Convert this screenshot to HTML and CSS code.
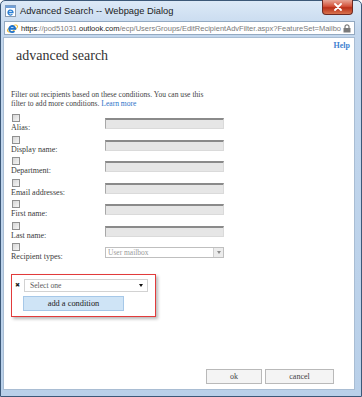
FILE: index.html
```html
<!DOCTYPE html>
<html lang="en">
<head>
    <meta charset="UTF-8">
    <title>Advanced Search -- Webpage Dialog</title>
    <link rel="stylesheet" href="styles.css">
</head>
<body>

<div class="window">
    <div class="titlebar">
        <svg class="title-icon" viewBox="0 0 11 12" xmlns="http://www.w3.org/2000/svg">
            <rect x="0.5" y="0.5" width="10" height="11" fill="#ffffff" stroke="#8a9bb0"/>
            <rect x="0.5" y="0.5" width="10" height="2.5" fill="#6f9fd8"/>
            <path d="M3 7.5h5a2.5 2.5 0 1 0 -0.6 1.7" fill="none" stroke="#2a7fd4" stroke-width="1.3"/>
        </svg>
        <span class="title-text">Advanced Search -- Webpage Dialog</span>
        <div class="close-btn">
            <svg viewBox="0 0 10 8" xmlns="http://www.w3.org/2000/svg">
                <path d="M2 1l6 6M8 1l-6 6" stroke="#ffffff" stroke-width="1.8" stroke-linecap="round"/>
            </svg>
        </div>
    </div>

    <div class="addressbar">
        <svg class="ie-icon" viewBox="0 0 12 12" xmlns="http://www.w3.org/2000/svg">
            <ellipse cx="6" cy="6" rx="6" ry="2.6" transform="rotate(-30 6 6)" fill="none" stroke="#f2b418" stroke-width="1"/>
            <path d="M2.6 6.3h6.4a3.3 3.3 0 1 0 -0.9 2.6" fill="none" stroke="#1e73cf" stroke-width="2"/>
        </svg>
        <span class="url"><span class="dark">https</span>://pod51031.<span class="dark">outlook.com</span>/ecp/UsersGroups/EditRecipientAdvFilter.aspx?FeatureSet=Mailbo</span>
        <svg class="lock" viewBox="0 0 8 9" xmlns="http://www.w3.org/2000/svg">
            <path d="M2 4V2.8a2 2 0 0 1 4 0V4" fill="none" stroke="#7a7a7a" stroke-width="1.2"/>
            <rect x="0.5" y="4" width="7" height="4.5" fill="#7a7a7a"/>
        </svg>
    </div>

    <div class="content">
        <div class="header">
            <h1>advanced search</h1>
            <a class="help">Help</a>
        </div>

        <p class="intro">Filter out recipients based on these conditions. You can use this filter to add more conditions. <span class="link">Learn more</span></p>

        <div class="fields">
            <div class="field-row">
                <div class="field-label"><input type="checkbox" class="check"><label>Alias:</label></div>
                <div class="textbox"></div>
            </div>
            <div class="field-row">
                <div class="field-label"><input type="checkbox" class="check"><label>Display name:</label></div>
                <div class="textbox"></div>
            </div>
            <div class="field-row">
                <div class="field-label"><input type="checkbox" class="check"><label>Department:</label></div>
                <div class="textbox"></div>
            </div>
            <div class="field-row">
                <div class="field-label"><input type="checkbox" class="check"><label>Email addresses:</label></div>
                <div class="textbox"></div>
            </div>
            <div class="field-row">
                <div class="field-label"><input type="checkbox" class="check"><label>First name:</label></div>
                <div class="textbox"></div>
            </div>
            <div class="field-row">
                <div class="field-label"><input type="checkbox" class="check"><label>Last name:</label></div>
                <div class="textbox"></div>
            </div>
            <div class="field-row">
                <div class="field-label"><input type="checkbox" class="check"><label>Recipient types:</label></div>
                <div class="dropdown">
                    <span>User mailbox</span>
                    <span class="dropdown-btn"><i class="tri-gray"></i></span>
                </div>
            </div>
        </div>

        <div class="condition-box">
            <div class="condition-row">
                <span class="remove">&#10006;</span>
                <div class="condition-select">
                    <span>Select one</span>
                    <i class="tri-black"></i>
                </div>
            </div>
            <div class="add-btn">add a condition</div>
        </div>

        <div class="footer">
            <div class="btn btn-ok">ok</div>
            <div class="btn btn-cancel">cancel</div>
        </div>
    </div>
</div>

</body>
</html>
```

FILE: styles.css
```css
* {
    box-sizing: border-box;
}

body {
    margin: 0;
    width: 362px;
    height: 397px;
    overflow: hidden;
    background: #ffffff;
}

.window {
    height: 397px;
    display: flex;
    flex-direction: column;
    border: 1px solid #3c5878;
    border-radius: 5px 5px 0 0;
    padding: 0 6px 6px 2px;
    background: linear-gradient(to bottom, #dce9f7 0px, #c3d7ed 30px, #b9d0e9 100%);
}

.titlebar {
    height: 19px;
    display: flex;
    align-items: center;
    padding-left: 2px;
}

.title-icon {
    width: 11px;
    height: 12px;
    margin-top: 1px;
}

.title-text {
    font-family: "Liberation Sans", sans-serif;
    font-size: 9.3px;
    color: #1b1b1b;
    margin-left: 4px;
}

.close-btn {
    margin-left: auto;
    margin-right: 2px;
    align-self: flex-start;
    margin-top: -1px;
    width: 31px;
    height: 15px;
    display: flex;
    align-items: center;
    justify-content: center;
    border: 1px solid #6e2a22;
    border-top: none;
    border-radius: 0 0 4px 4px;
    background: linear-gradient(to bottom, #e8a595 0%, #d3533b 45%, #b92f18 55%, #d8734e 100%);
}

.close-btn svg {
    width: 10px;
    height: 8px;
}

.addressbar {
    height: 14px;
    margin-left: 1px;
    margin-top: 1px;
    display: flex;
    align-items: center;
    background: #ffffff;
    border: 1px solid #93a9c1;
    padding: 0 3px 0 2px;
}

.ie-icon {
    width: 11px;
    height: 11px;
    flex-shrink: 0;
}

.url {
    font-family: "Liberation Sans", sans-serif;
    font-size: 7.5px;
    color: #7a7a7a;
    margin-left: 3px;
    white-space: nowrap;
    flex: 1;
}

.url .dark {
    color: #1a1a1a;
}

.lock {
    width: 8px;
    height: 9px;
    flex-shrink: 0;
}

.content {
    flex: 1;
    margin-top: 2px;
    background: #ffffff;
    border: 1px solid #a9bdd3;
    display: flex;
    flex-direction: column;
    padding: 3px 4px 0 7px;
    font-family: "Liberation Serif", serif;
    color: #3a3a3a;
}

.header {
    display: flex;
    align-items: flex-start;
}

.header h1 {
    margin: 7px 0 0 5px;
    font-size: 14px;
    line-height: 16px;
    font-weight: normal;
    color: #333333;
}

.help {
    margin-left: auto;
    font-size: 8px;
    line-height: 9px;
    font-weight: bold;
    color: #3f82d0;
}

.intro {
    margin: 26px 0 0 0;
    width: 206px;
    font-size: 7.6px;
    line-height: 9px;
    color: #444444;
}

.intro .link {
    color: #2a72c8;
}

.fields {
    margin-top: 6px;
}

.field-row {
    display: flex;
    align-items: center;
    height: 19px;
    margin-bottom: 2.5px;
}

.field-label {
    width: 94px;
    display: flex;
    flex-direction: column;
    align-items: flex-start;
}

.check {
    appearance: none;
    margin: 0 0 1px 1px;
    width: 8px;
    height: 8px;
    border: 1px solid #909090;
    background: linear-gradient(135deg, #d6d6d6, #f6f6f6);
}

.field-label label {
    font-size: 8px;
    line-height: 10px;
    color: #3a3a3a;
    white-space: nowrap;
}

.textbox {
    width: 119px;
    height: 11px;
    background: #e6e6e6;
    border-top: 2px solid #8a8a8a;
    border-left: 1px solid #a8a8a8;
    border-right: 1px solid #dadada;
    border-bottom: 1px solid #dadada;
}

.dropdown {
    width: 119px;
    height: 11px;
    display: flex;
    align-items: center;
    justify-content: space-between;
    border: 1px solid #bfbfbf;
    font-size: 7.5px;
    color: #9a9a9a;
    padding-left: 2px;
}

.dropdown-btn {
    width: 10px;
    height: 9px;
    display: flex;
    align-items: center;
    justify-content: center;
    background: #ececec;
    border-left: 1px solid #cfcfcf;
}

.tri-gray {
    border-left: 2.5px solid transparent;
    border-right: 2.5px solid transparent;
    border-top: 3px solid #8c8c8c;
}

.condition-box {
    margin-top: 9px;
    width: 145px;
    border: 1px solid #e23b3b;
    box-shadow: 2px 2px 3px rgba(0, 0, 0, 0.28);
    padding: 4px 7px 5px 3px;
}

.condition-row {
    display: flex;
    align-items: center;
}

.remove {
    width: 9px;
    font-size: 6px;
    line-height: 8px;
    color: #222222;
}

.condition-select {
    flex: 1;
    height: 13px;
    display: flex;
    align-items: center;
    justify-content: space-between;
    border: 1px solid #d2d2d2;
    padding: 0 4px 0 5px;
    font-size: 7.6px;
    color: #5a5a5a;
}

.tri-black {
    border-left: 2.5px solid transparent;
    border-right: 2.5px solid transparent;
    border-top: 3px solid #111111;
}

.add-btn {
    margin: 4px 0 0 8px;
    width: 101px;
    height: 15px;
    display: flex;
    align-items: center;
    justify-content: center;
    background: #cfe4f6;
    border: 1px solid #a6c8e8;
    font-size: 8.4px;
    color: #222222;
}

.footer {
    margin-top: auto;
    display: flex;
    justify-content: flex-end;
    gap: 3px;
    padding: 0 16px 5px 0;
}

.btn {
    height: 15px;
    display: flex;
    align-items: center;
    justify-content: center;
    background: #f4f4f4;
    border: 1px solid #b9b9b9;
    font-size: 8px;
    color: #444444;
}

.btn-ok {
    width: 56px;
}

.btn-cancel {
    width: 69px;
}
```
